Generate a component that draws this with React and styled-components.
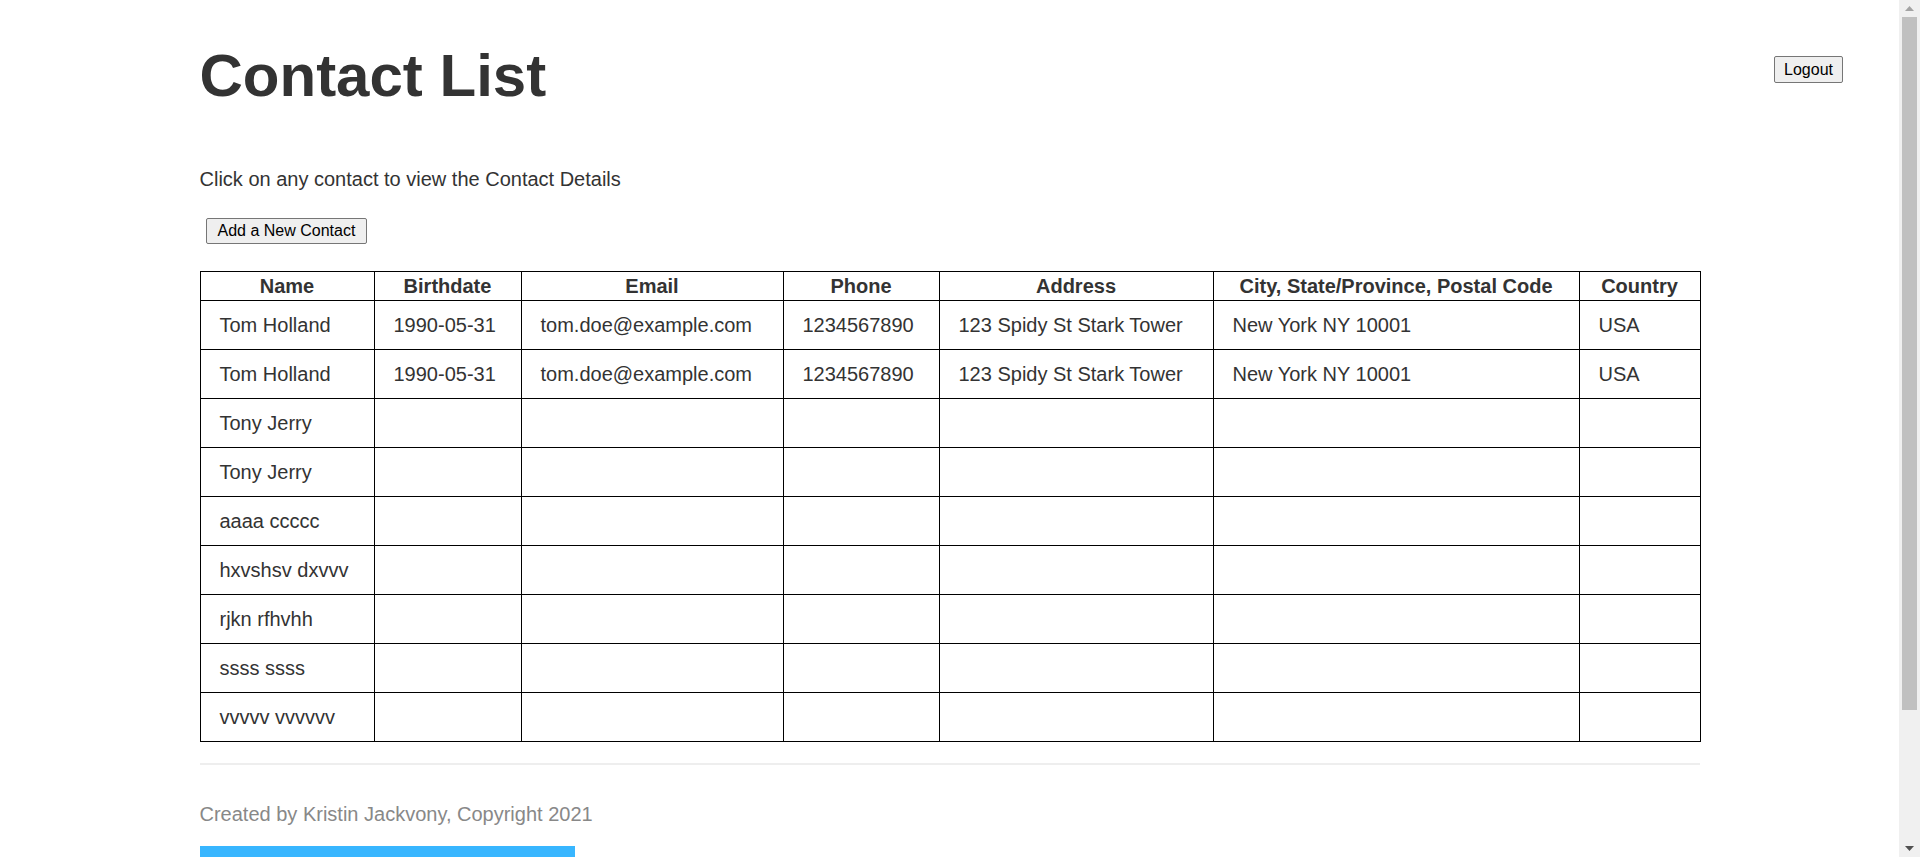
import styled, { createGlobalStyle } from "styled-components";

const GlobalStyle = createGlobalStyle`
  html, body {
    margin: 0;
    height: 100%;
    overflow: hidden;
  }
  body {
    font-family: "Liberation Sans", Arial, sans-serif;
    color: #333;
    background: #fff;
  }
`;

const Shell = styled.div`
  display: flex;
  height: 100vh;
`;

const Page = styled.div`
  flex: 1;
  min-width: 0;
  overflow: hidden;
`;

const ScrollTrack = styled.div`
  width: 21px;
  flex: none;
  display: flex;
  flex-direction: column;
  background: #f0f0f0;
`;

const ScrollArrow = styled.div`
  height: 17px;
  display: flex;
  align-items: center;
  justify-content: center;
  margin-top: ${(p) => (p.$down ? "auto" : "0")};
`;

const ScrollThumb = styled.div`
  height: 693px;
  margin: 0 3px;
  background: #c0c0c0;
`;

const Header = styled.header`
  display: grid;
  grid-template-columns: 1fr 1500px 1fr;
  align-items: start;
`;

const Title = styled.h1`
  grid-column: 2;
  margin: 41px 0 0;
  font-size: 60px;
  line-height: 69px;
  font-weight: 700;
  color: #333;
`;

const Button = styled.button`
  font-family: "Liberation Sans", Arial, sans-serif;
  font-size: 16px;
  line-height: 20px;
  color: #000;
  background: #efefef;
  border: 1px solid #767676;
  border-radius: 2px;
  padding: 2px ${(p) => p.$padX || 10}px;
  cursor: pointer;
`;

const LogoutButton = styled(Button)`
  grid-column: 3;
  justify-self: end;
  margin: 56px 56px 0 0;
  height: 27px;
`;

const Main = styled.main`
  width: 1500px;
  margin: 0 auto;
`;

const Intro = styled.p`
  margin: 58px 0 0;
  font-size: 20px;
  line-height: 23px;
`;

const AddButton = styled(Button)`
  margin: 27px 0 0 6px;
  height: 26px;
`;

const Table = styled.table`
  width: 100%;
  margin-top: 27px;
  border-collapse: collapse;
  table-layout: fixed;
  font-size: 20px;
`;

const Th = styled.th`
  border: 1px solid #000;
  padding: 3px 6px;
  line-height: 22px;
  font-weight: 700;
  text-align: center;
  white-space: nowrap;
`;

const Td = styled.td`
  border: 1px solid #000;
  padding: 12px 19px;
  line-height: 24px;
  text-align: left;
  white-space: nowrap;
`;

const Divider = styled.hr`
  margin: 21px 0 0;
  border: 0;
  border-top: 2px solid #eee;
`;

const Credit = styled.p`
  margin: 38px 0 0;
  font-size: 20px;
  line-height: 23px;
  color: #888;
`;

const Banner = styled.div`
  width: 375px;
  height: 150px;
  margin: 20px 0 22px;
  background: #38b6ff;
`;

const columns = [
  { label: "Name", width: 174 },
  { label: "Birthdate", width: 147 },
  { label: "Email", width: 262 },
  { label: "Phone", width: 156 },
  { label: "Address", width: 274 },
  { label: "City, State/Province, Postal Code", width: 366 },
  { label: "Country", width: 121 },
];

const tom = [
  "Tom Holland",
  "1990-05-31",
  "tom.doe@example.com",
  "1234567890",
  "123 Spidy St Stark Tower",
  "New York NY 10001",
  "USA",
];

const contacts = [
  tom,
  tom,
  ["Tony Jerry"],
  ["Tony Jerry"],
  ["aaaa ccccc"],
  ["hxvshsv dxvvv"],
  ["rjkn rfhvhh"],
  ["ssss ssss"],
  ["vvvvv vvvvvv"],
];

function Arrow({ down }) {
  return (
    <ScrollArrow $down={down}>
      <svg width="9" height="5" viewBox="0 0 9 5">
        <path
          d={down ? "M0 0H9L4.5 5Z" : "M0 5H9L4.5 0Z"}
          fill={down ? "#505050" : "#a3a3a3"}
        />
      </svg>
    </ScrollArrow>
  );
}

function App() {
  return (
    <Shell>
      <GlobalStyle />
      <Page>
        <Header>
          <Title>Contact List</Title>
          <LogoutButton $padX={9}>Logout</LogoutButton>
        </Header>
        <Main>
          <Intro>Click on any contact to view the Contact Details</Intro>
          <AddButton $padX={11}>Add a New Contact</AddButton>
          <Table>
            <colgroup>
              {columns.map((c) => (
                <col key={c.label} style={{ width: c.width }} />
              ))}
            </colgroup>
            <thead>
              <tr>
                {columns.map((c) => (
                  <Th key={c.label}>{c.label}</Th>
                ))}
              </tr>
            </thead>
            <tbody>
              {contacts.map((row, i) => (
                <tr key={i}>
                  {columns.map((c, j) => (
                    <Td key={c.label}>{row[j] || ""}</Td>
                  ))}
                </tr>
              ))}
            </tbody>
          </Table>
          <Divider />
          <Credit>Created by Kristin Jackvony, Copyright 2021</Credit>
          <Banner />
        </Main>
      </Page>
      <ScrollTrack>
        <Arrow />
        <ScrollThumb />
        <Arrow down />
      </ScrollTrack>
    </Shell>
  );
}

export default App;
